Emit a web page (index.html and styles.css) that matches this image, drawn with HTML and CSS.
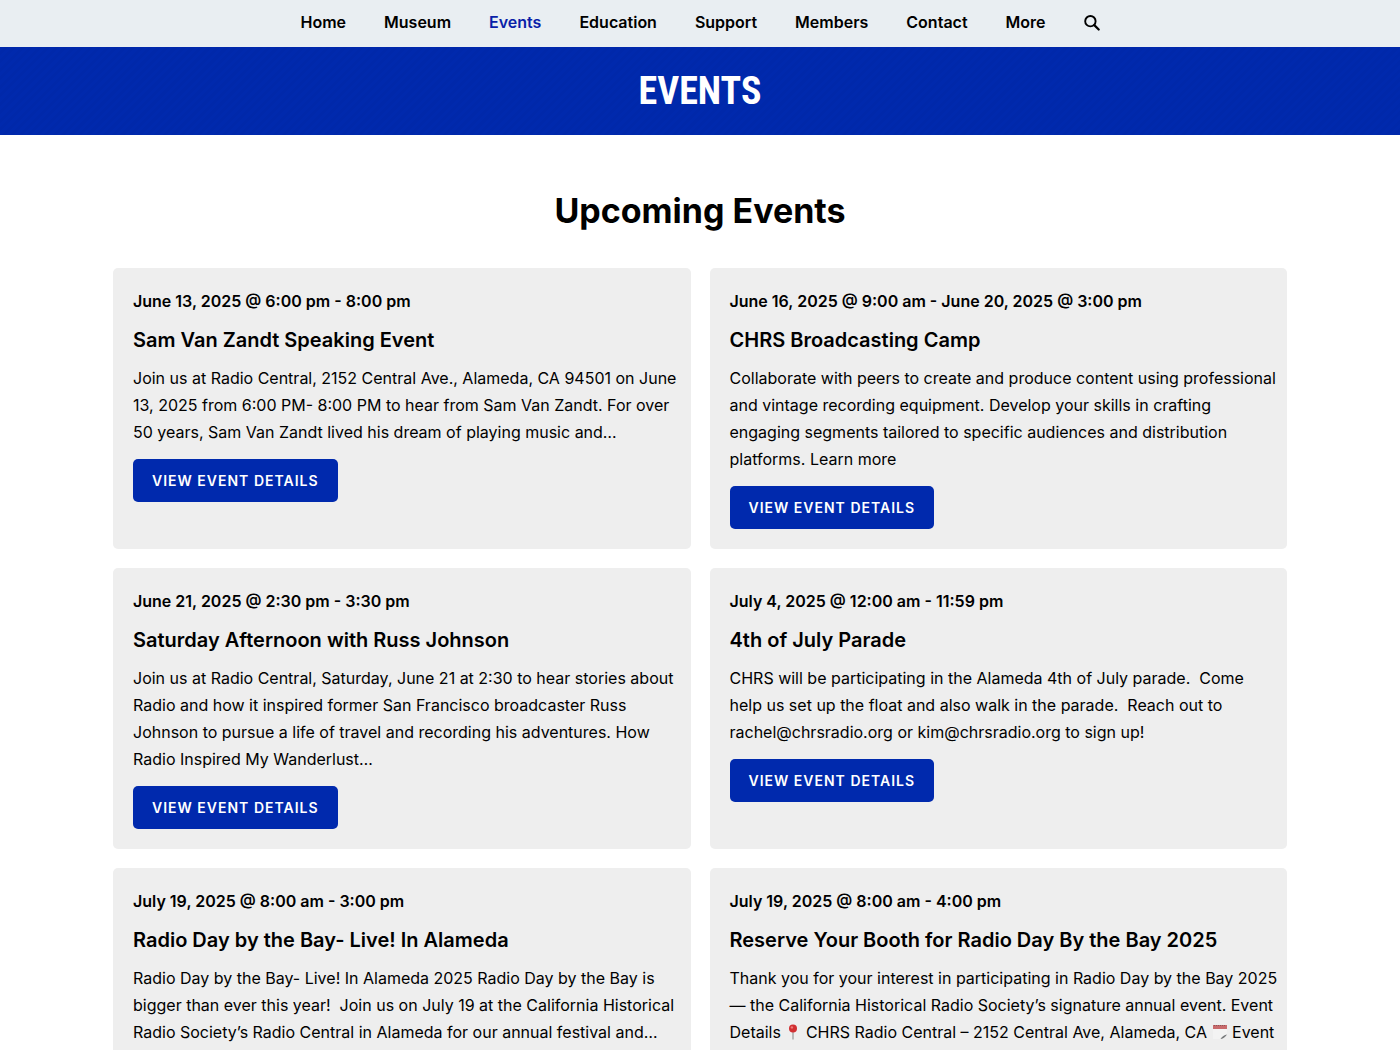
FILE: index.html
```html
<!DOCTYPE html>
<html lang="en">
<head>
<meta charset="utf-8">
<meta name="viewport" content="width=device-width, initial-scale=1">
<title>Events</title>
<link rel="stylesheet" href="styles.css">
</head>
<body>
<header>
  <nav class="nav" aria-label="Main">
    <a href="#">Home</a>
    <a href="#">Museum</a>
    <a href="#" class="current" aria-current="page">Events</a>
    <a href="#">Education</a>
    <a href="#">Support</a>
    <a href="#">Members</a>
    <a href="#">Contact</a>
    <a href="#">More</a>
    <button class="search" type="button" aria-label="Search">
      <svg viewBox="0 0 16 16" width="16" height="16" aria-hidden="true"><circle cx="6.4" cy="6.2" r="5.2" fill="none" stroke="currentColor" stroke-width="1.9"/><path d="M10.300 10.100 14.700 14.500" stroke="currentColor" stroke-width="2.200" stroke-linecap="round"/></svg>
    </button>
  </nav>
  <div class="banner"><h1>EVENTS</h1></div>
</header>
<main class="content">
  <h2 class="heading">Upcoming Events</h2>
  <div class="grid">
    <article class="card">
      <p class="date">June 13, 2025 @ 6:00 pm - 8:00 pm</p>
      <h3>Sam Van Zandt Speaking Event</h3>
      <p class="text">Join us at Radio Central, 2152 Central Ave., Alameda, CA 94501 on June 13, 2025 from 6:00 PM- 8:00 PM to hear from Sam Van Zandt. For over 50 years, Sam Van Zandt lived his dream of playing music and…</p>
      <a class="button" href="#">VIEW EVENT DETAILS</a>
    </article>
    <article class="card">
      <p class="date">June 16, 2025 @ 9:00 am - June 20, 2025 @ 3:00 pm</p>
      <h3>CHRS Broadcasting Camp</h3>
      <p class="text">Collaborate with peers to create and produce content using professional and vintage recording equipment. Develop your skills in crafting engaging segments tailored to specific audiences and distribution platforms. Learn more</p>
      <a class="button" href="#">VIEW EVENT DETAILS</a>
    </article>
    <article class="card">
      <p class="date">June 21, 2025 @ 2:30 pm - 3:30 pm</p>
      <h3>Saturday Afternoon with Russ Johnson</h3>
      <p class="text">Join us at Radio Central, Saturday, June 21 at 2:30 to hear stories about Radio and how it inspired former San Francisco broadcaster Russ Johnson to pursue a life of travel and recording his adventures. How Radio Inspired My Wanderlust…</p>
      <a class="button" href="#">VIEW EVENT DETAILS</a>
    </article>
    <article class="card">
      <p class="date">July 4, 2025 @ 12:00 am - 11:59 pm</p>
      <h3>4th of July Parade</h3>
      <p class="text">CHRS will be participating in the Alameda 4th of July parade.&nbsp; Come help us set up the float and also walk in the parade.&nbsp; Reach out to rachel@chrsradio.org or kim@chrsradio.org to sign up!</p>
      <a class="button" href="#">VIEW EVENT DETAILS</a>
    </article>
    <article class="card">
      <p class="date">July 19, 2025 @ 8:00 am - 3:00 pm</p>
      <h3>Radio Day by the Bay- Live! In Alameda</h3>
      <p class="text">Radio Day by the Bay- Live! In Alameda 2025 Radio Day by the Bay is bigger than ever this year!&nbsp; Join us on July 19 at the California Historical Radio Society’s Radio Central in Alameda for our annual festival and…</p>
      <a class="button" href="#">VIEW EVENT DETAILS</a>
    </article>
    <article class="card">
      <p class="date">July 19, 2025 @ 8:00 am - 4:00 pm</p>
      <h3>Reserve Your Booth for Radio Day By the Bay 2025</h3>
      <p class="text">Thank you for your interest in participating in Radio Day by the Bay 2025 — the California Historical Radio Society’s signature annual event. Event Details <svg class="emoji" viewBox="0 0 16 16" role="img" aria-label="Location"><path d="M8 7v8" stroke="#a3a3a3" stroke-width="1.4" stroke-linecap="round"/><circle cx="8" cy="4.6" r="4" fill="#d12f32"/><circle cx="6.9" cy="3.4" r="1.2" fill="#ee7b78"/></svg> CHRS Radio Central – 2152 Central Ave, Alameda, CA <svg class="emoji" viewBox="0 0 16 16" role="img" aria-label="Date"><path d="M1 1h14v9l-5 5H1z" fill="#f3f3f3"/><path d="M1 1h14v4H1z" fill="#c96a6c"/><path d="M2 1.5h12" stroke="#8d5556" stroke-dasharray="1 1"/><path d="M8.500 15c2-.2 5-2 6.500-4.600-2.500.3-5 2-6.500 4.600z" fill="#77797b"/></svg> Event</p>
      <a class="button" href="#">VIEW EVENT DETAILS</a>
    </article>
  </div>
</main>
</body>
</html>
```
FILE: styles.css
```css
* { box-sizing: border-box; }
body {
  margin: 0;
  background: #fff;
  color: #000;
  font: 16px/27px Inter, "Liberation Sans", sans-serif;
}
h1, h2, h3, p { margin: 0; }
a { color: inherit; text-decoration: none; }
.nav {
  display: flex;
  justify-content: center;
  align-items: center;
  gap: 38px;
  padding: 9px 20px 11px;
  background: #e9eef2;
  font-weight: 600;
}
.nav .current { color: #0a1fa8; }
.search {
  display: flex;
  padding: 0;
  border: 0;
  background: none;
  color: #000;
}
.banner {
  padding: 20px;
  background: repeating-linear-gradient(135deg, #0029ad 0 3px, #0028aa 3px 6px);
  color: #fff;
  text-align: center;
}
.banner h1 {
  font: 700 38px/48px "Liberation Sans Narrow", "Roboto Condensed", "DejaVu Sans Condensed", sans-serif;
}
.content {
  max-width: 1214px;
  margin: 0 auto;
  padding: 52px 20px;
}
.heading {
  margin-bottom: 33px;
  font-size: 34px;
  line-height: 48px;
  font-weight: 700;
  text-align: center;
}
.grid {
  display: grid;
  grid-template-columns: 1fr 1fr;
  gap: 19px;
}
.card {
  padding: 20px 8px 20px 20px;
  border-radius: 5px;
  background: #eee;
}
.date {
  font-weight: 600;
  line-height: 26px;
}
.card h3 {
  margin: 12px 0 11px;
  font-size: 20px;
  line-height: 28px;
  font-weight: 600;
}
.text { margin-bottom: 13px; }
.emoji {
  width: 16px;
  height: 16px;
  vertical-align: -2px;
}
.button {
  display: inline-block;
  padding: 8px 19px;
  border-radius: 5px;
  background: #0029ad;
  color: #fff;
  font-size: 14px;
  font-weight: 600;
  letter-spacing: 1px;
  vertical-align: top;
}
```
